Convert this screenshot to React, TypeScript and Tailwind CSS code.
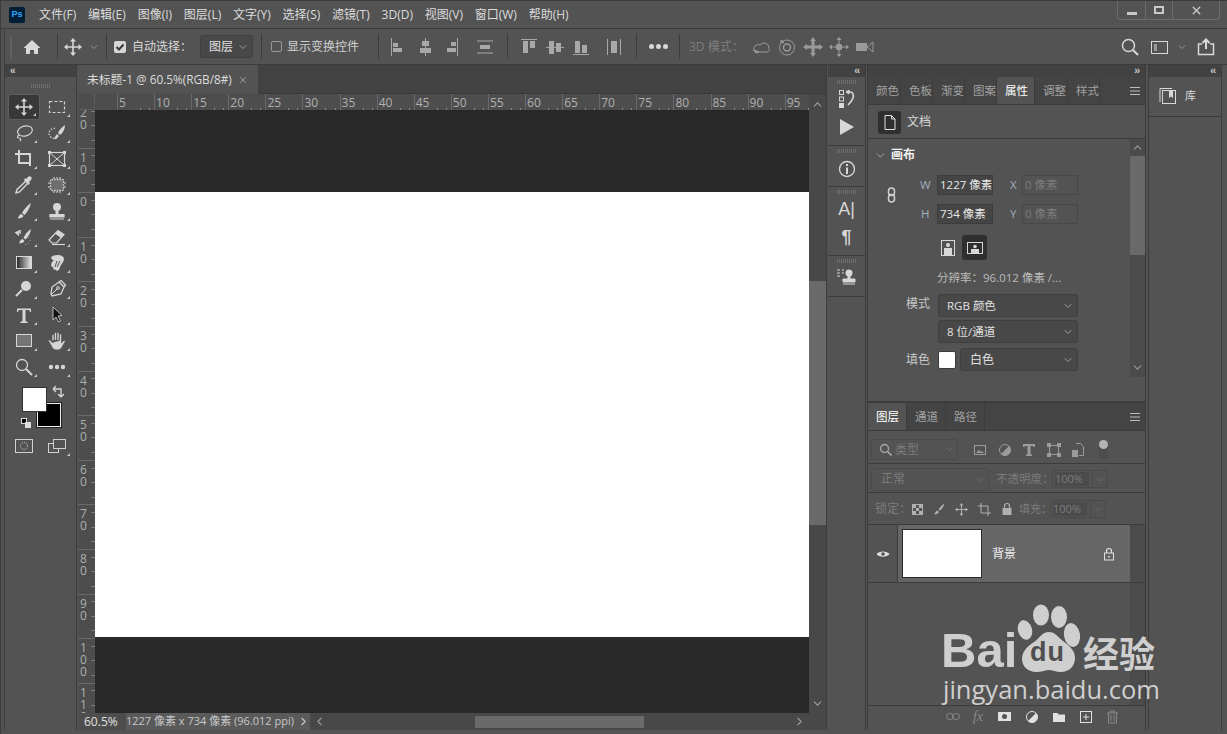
import type { ReactNode } from "react";
import { ChevronDown, ChevronUp, ChevronLeft, ChevronRight, X } from "lucide-react";

const menus = ["文件(F)", "编辑(E)", "图像(I)", "图层(L)", "文字(Y)", "选择(S)", "滤镜(T)", "3D(D)", "视图(V)", "窗口(W)", "帮助(H)"];
const hTicks = [5, 10, 15, 20, 25, 30, 35, 40, 45, 50, 55, 60, 65, 70, 75, 80, 85, 90, 95];
const vTicks = ["20", "10", "0", "10", "20", "30", "40", "50", "60", "70", "80", "90", "100", "110"];

function Ic({ w = 20, h = 20, children, className = "" }: { w?: number; h?: number; children: ReactNode; className?: string }) {
  return (
    <svg width={w} height={h} viewBox={`0 0 ${w} ${h}`} fill="none" stroke="currentColor" strokeWidth="1" className={"shrink-0 " + className}>
      {children}
    </svg>
  );
}

function MoveGlyph() {
  return (
    <Ic>
      <path d="M10 3v14M3 10h14" strokeWidth="1.6" />
      <path d="M10 1l3 3.5H7zM10 19l3-3.5H7zM1 10l3.5-3v6zM19 10l-3.5-3v6z" fill="currentColor" stroke="none" />
    </Ic>
  );
}

const toolIcons: ReactNode[] = [
  <MoveGlyph />,
  <Ic><rect x="2.5" y="4.5" width="15" height="11" strokeDasharray="3 2" strokeWidth="1.2" /></Ic>,
  <Ic><ellipse cx="11" cy="8" rx="7.5" ry="5" transform="rotate(-15 11 8)" strokeWidth="1.2" /><path d="M5 12c-2 1-2 3 0 3s2 2 1 3" strokeWidth="1.2" /></Ic>,
  <Ic><path d="M8 5.5a5 5 0 1 0 2 9" strokeDasharray="1.4 1.6" strokeWidth="1.4" /><path d="M18 2c-3 2-6 5-7 8l2 2c3-2 5-6 5-10zM10 11l2 2-3 3c-1 .5-2 0-1.5-1.500z" fill="currentColor" stroke="none" /></Ic>,
  <Ic><path d="M1 5h4M5 1v13h12M5 5h11v12" strokeWidth="2" /></Ic>,
  <Ic><rect x="2.500" y="3.500" width="15" height="13" strokeWidth="1.2" /><path d="M2.500 3.500l15 13M17.500 3.500l-15 13" /><rect x="1" y="2" width="3" height="3" fill="currentColor" stroke="none" /><rect x="16" y="2" width="3" height="3" fill="currentColor" stroke="none" /><rect x="1" y="15" width="3" height="3" fill="currentColor" stroke="none" /><rect x="16" y="15" width="3" height="3" fill="currentColor" stroke="none" /></Ic>,
  <Ic><path d="M11.500 6.500L3 14.500l-1 3.500 3.500-1 8-8.500" strokeWidth="1.400" /><path d="M10 5.500L14.500 10l1.500-2-1-1 2-2c1-1.200 .8-2.500 0-3.200s-2-.8-3 .2l-2 2-1-1z" fill="currentColor" stroke="none" /></Ic>,
  <Ic><rect x="3.500" y="4.500" width="13" height="11" rx="1" fill="#6e6e6e" strokeDasharray="1.500 1.200" strokeWidth="1.400" /><path d="M7 2v2M10 2v2M13 2v2M7 16v2M10 16v2M13 16v2M1 8h2M1 12h2M17 8h2M17 12h2" /></Ic>,
  <Ic><path d="M17 2c-3 2-7 6-9 10l2.500 2c3-3 5.500-8 6.500-12zM7.500 13c-2 .5-3 2-3.500 4.500 2.500 0 5-1 5.500-2.800z" fill="currentColor" stroke="none" /></Ic>,
  <Ic><circle cx="10" cy="6" r="4" fill="currentColor" stroke="none" /><rect x="8.500" y="9" width="3" height="4" fill="currentColor" stroke="none" /><path d="M3 13.500h14v2.500H3zM3 18h14" fill="currentColor" strokeWidth="1.200" stroke="currentColor" /></Ic>,
  <Ic><path d="M17 2c-3 2-6 5-7.500 9l2 1.500c3-2.500 5-6.500 5.500-10.500zM8.500 12c-2 .5-2.800 2-3.300 4.500 2.500 0 4.800-1 5.300-2.800z" fill="currentColor" stroke="none" /><path d="M2 5.500l5 .5M7 3.500L2 5.500l3 3" strokeWidth="1.500" /><path d="M15 10v.5M16 13v.5M14 16v.5M11.500 17.500v.5" strokeWidth="1.200" /></Ic>,
  <Ic><path d="M2 13L11 3.500l6 4-7.500 8.500H5z" strokeWidth="1.200" /><path d="M11 3.500l6 4-3 3.500-6-4.500z" fill="currentColor" stroke="none" /><path d="M5 17.500h13" strokeWidth="1.200" /></Ic>,
  <Ic><defs><linearGradient id="grad"><stop offset="0" stopColor="#222" /><stop offset="1" stopColor="#e8e8e8" /></linearGradient></defs><rect x="2.500" y="3.500" width="15" height="12" fill="url(#grad)" stroke="#d8d8d8" /></Ic>,
  <Ic><path d="M4 4c4-3.500 13-2.500 13 2 0 3-3 5-4 8-1 4-3.500 5-4.500 2.500-1.500 1-2.500-.5-2.500-2.500-1.500 0-2.500-1-1.500-3.500 0-2 2-2 2-3.500-1.500 0-3-2-2-3z" fill="currentColor" stroke="none" /><path d="M10 8l-2 6M13 8l-3 6" stroke="#535353" /></Ic>,
  <Ic><circle cx="12" cy="7" r="5" fill="currentColor" stroke="none" /><path d="M8 11l-6 6" strokeWidth="2" /></Ic>,
  <Ic><path d="M12 3l5 5-3 7-9 2-1-2 1-7z" strokeWidth="1.300" /><path d="M4 16l6-6" /><circle cx="11" cy="9" r="1.400" /><path d="M12 3l2-1.500L18.500 6 17 8" strokeWidth="1.300" /></Ic>,
  <Ic><path d="M3 7V3.500h14V7h-1c0-1.500-1-2-2-2h-2.500v10.500c0 1 .5 1 2 1V18H6.500v-1.500c1.500 0 2 0 2-1V5H6C5 5 4 5.500 4 7z" fill="currentColor" stroke="none" /></Ic>,
  <Ic><path d="M6 2l9 8.500-4 .5 2.500 5-2 1-2.500-5L6 15z" fill="#111" stroke="#d8d8d8" strokeWidth=".8" /></Ic>,
  <Ic><rect x="2.500" y="3.500" width="15" height="12" fill="#757575" stroke="#d8d8d8" /></Ic>,
  <Ic><path d="M5 9.500V4.500a1 1 0 0 1 2 0V9M7.500 9V2.500a1 1 0 0 1 2 0V9M10 9V2.500a1 1 0 0 1 2 0V9M12.500 9.500V4a1 1 0 0 1 2 0v8c1-1.500 2.500-3 3.500-2.500s-1.500 3.500-3 6.500c-1 2-2.500 3-5 3-3 0-4.500-1.500-5.500-4L1.500 10c-.5-1 1-1.500 2-.5L5 11.500z" fill="currentColor" stroke="#535353" strokeWidth=".6" /></Ic>,
  <Ic><circle cx="8" cy="8" r="5.500" strokeWidth="1.300" /><path d="M12 12l6 6" strokeWidth="2" /></Ic>,
  <Ic><circle cx="4" cy="10" r="2.200" fill="currentColor" stroke="none" /><circle cx="10" cy="10" r="2.200" fill="currentColor" stroke="none" /><circle cx="16" cy="10" r="2.200" fill="currentColor" stroke="none" /></Ic>,
];

function Tool({ children, active, corner = true }: { children: ReactNode; active?: boolean; corner?: boolean }) {
  return (
    <div className={"relative flex h-[26px] w-[32px] items-center justify-center rounded-[3px] text-[#d6d6d6] " + (active ? "border border-[#5e5e5e] bg-[#383838]" : "")}>
      {children}
      {corner && <span className="absolute bottom-[3px] right-[3px] h-0 w-0 border-b-[3px] border-l-[3px] border-b-[#c8c8c8] border-l-transparent" />}
    </div>
  );
}

function Gripper({ w = "w-[20px]" }: { w?: string }) {
  return <div className={"mx-auto h-[4px] bg-[repeating-linear-gradient(90deg,#6e6e6e_0_1px,transparent_1px_2px)] " + w} />;
}

function StripChev({ dir = "l" }: { dir?: "l" | "r" }) {
  return <span className="font-['Liberation_Sans',sans-serif] text-[10px] font-bold leading-[12px] tracking-[-1px] text-[#d0d0d0]">{dir === "l" ? "‹‹" : "››"}</span>;
}

function Div() {
  return <div className="h-[25px] w-px bg-[#3c3c3c]" />;
}

function Bars({ d, v }: { d: string; v: string }) {
  return (
    <Ic w={22} h={20} className="text-[#a8a8a8]">
      <path d={d} />
      <path d={v} fill="currentColor" stroke="none" />
    </Ic>
  );
}

function Sel({ children, className = "" }: { children: ReactNode; className?: string }) {
  return (
    <div className={"flex items-center justify-between rounded-[3px] border border-[#3f3f3f] bg-[#484848] pr-[3px] text-[#e0e0e0] " + className}>
      <span className="truncate">{children}</span>
      <ChevronDown size={12} strokeWidth={1.5} className="text-[#b8b8b8]" />
    </div>
  );
}

function Field({ children, off }: { children: ReactNode; off?: boolean }) {
  return (
    <div className={"flex h-[20px] w-[56px] items-center whitespace-nowrap border pl-[2px] text-[11.500px] " + (off ? "border-[#484848] text-[#7b7b7b]" : "border-[#3c3c3c] bg-[#454545] text-[#e8e8e8]")}>
      {children}
    </div>
  );
}

function Tab({ label, active, w, pl = "pl-[8px]" }: { label: string; active?: boolean; w: string; pl?: string }) {
  return (
    <div className={"flex h-full items-center whitespace-nowrap border-r border-[#3c3c3c] text-[11.500px] " + pl + " " + w + (active ? " bg-[#535353] text-white" : " text-[#a2a2a2]")}>
      {label}
    </div>
  );
}

function Pct() {
  return (
    <div className="ml-[3px] flex h-[18px] w-[56px] items-center rounded-[2px] border border-[#4a4a4a]">
      <span className="ml-[2px] flex h-[14px] w-[34px] items-center bg-[#4b4b4b] text-[11px] text-[#7c7c7c]">100%</span>
      <span className="ml-auto flex h-full w-[15px] items-center justify-center border-l border-[#4a4a4a] text-[#6e6e6e]">
        <ChevronDown size={11} />
      </span>
    </div>
  );
}

function LockIcon({ className = "" }: { className?: string }) {
  return (
    <Ic w={12} h={14} className={className}>
      <path d="M3.500 6V4a2.500 2.500 0 0 1 5 0v2" strokeWidth="1.200" />
      <rect x="1.500" y="6" width="9" height="7" fill="currentColor" stroke="none" />
    </Ic>
  );
}

function Cell({ w, children }: { w: string; children: ReactNode }) {
  return <div className={"flex items-center justify-center " + w}>{children}</div>;
}

export default function App() {
  return (
    <div className="relative flex h-[734px] w-[1227px] flex-col overflow-hidden border-l border-t border-[#3c3c3c] bg-[#535353] font-['Open_Sans','Noto_Sans_CJK_SC',sans-serif] text-[12px] text-[#d4d4d4]">
      {/* menu bar */}
      <div className="flex h-[28px] shrink-0 items-start border-b border-[#3c3c3c]">
        <div className="ml-[8px] mt-[6px] flex h-[16px] w-[16px] items-center justify-center rounded-[2px] bg-[#001e36] font-['Liberation_Sans',sans-serif] text-[9px] font-bold text-[#31a8ff]">Ps</div>
        <div className="ml-[14px] mt-[5px] flex gap-[11.800px] text-[#dcdcdc]">
          {menus.map((m) => (
            <span key={m} className="whitespace-nowrap leading-[18px]">{m}</span>
          ))}
        </div>
        <div className="ml-auto mr-[7px] flex h-[19px] w-[103px] rounded-b-[4px] border border-t-0 border-[#6c6c6c] text-[#c8c8c8]">
          <div className="flex w-[28px] items-end justify-center border-r border-[#6c6c6c] pb-[4px]"><div className="h-[3px] w-[10px] bg-[#c8c8c8]" /></div>
          <div className="flex w-[27px] items-center justify-center border-r border-[#6c6c6c]"><div className="h-[8px] w-[10px] border-2 border-[#c8c8c8]" /></div>
          <div className="flex flex-1 items-center justify-center"><X size={13} strokeWidth={2.600} /></div>
        </div>
      </div>

      {/* options bar */}
      <div className="ml-[3px] flex h-[36px] shrink-0 items-center border-b border-l border-[#3c3c3c]">
        <div className="ml-[5px] h-[22px] w-[2px] bg-[repeating-linear-gradient(0deg,#6e6e6e_0_1px,transparent_1px_2px)]" />
        <div className="flex w-[45px] justify-center pr-[5px] text-[#d8d8d8]">
          <Ic w={18} h={16}><path d="M9 1L0.500 9H3v6h4v-4h4v4h4V9h2.500z" fill="currentColor" stroke="none" /></Ic>
        </div>
        <Div />
        <div className="ml-[5px] text-[#d8d8d8]"><MoveGlyph /></div>
        <ChevronDown size={12} strokeWidth={1.500} className="ml-[5px] text-[#a8a8a8]" />
        <div className="ml-[6px]"><Div /></div>
        <div className="ml-[7px] flex h-[12px] w-[12px] items-center justify-center rounded-[2px] bg-[#d6d6d6]">
          <svg width="10" height="10" viewBox="0 0 10 10" fill="none" stroke="#3a3a3a" strokeWidth="2"><path d="M1.500 5l2.500 2.500 4.500-5" /></svg>
        </div>
        <span className="ml-[6px] w-[68px] whitespace-nowrap text-[#d8d8d8]">自动选择：</span>
        <Sel className="h-[23px] w-[53px] pl-[8px] text-[12px]">图层</Sel>
        <div className="ml-[8px]"><Div /></div>
        <div className="ml-[9px] h-[11px] w-[11px] rounded-[2px] border border-[#999]" />
        <span className="ml-[5px] w-[91px] whitespace-nowrap text-[#d0d0d0]">显示变换控件</span>
        <Div />
        <div className="ml-[10px] flex w-[115px] items-center">
          <div className="w-[25px]"><Bars d="M2.500 1v18" v="M4 6h5v4H4zM4 11h9v4H4z" /></div>
          <div className="w-[26px]"><Bars d="M11.500 1v18" v="M8 4h7v5H8zM6 11h11v5H6z" /></div>
          <div className="w-[34px]"><Bars d="M17.500 1v18" v="M11 5h5v4h-5zM7 11h9v4H7z" /></div>
          <Bars d="M3 4h16M3 16h16" v="M6 8h10v4H6z" />
        </div>
        <div className="ml-[3px]"><Div /></div>
        <div className="ml-[10px] flex w-[118px] items-center">
          <div className="w-[26px]"><Bars d="M3 2.500h16" v="M5 4h5v12H5zM12 4h5v7h-5z" /></div>
          <div className="w-[26px]"><Bars d="M2 10.500h18" v="M5 4h5v13H5zM12 6h5v9h-5z" /></div>
          <div className="w-[33px]"><Bars d="M3 17.500h16" v="M5 4h5v12H5zM12 8h5v8h-5z" /></div>
          <Bars d="M4.500 2v16M17.500 2v16" v="M8 4h6v12H8z" />
        </div>
        <Div />
        <div className="flex w-[42px] justify-center gap-[2px]">
          <span className="h-[5px] w-[5px] rounded-full bg-[#d8d8d8]" />
          <span className="h-[5px] w-[5px] rounded-full bg-[#d8d8d8]" />
          <span className="h-[5px] w-[5px] rounded-full bg-[#d8d8d8]" />
        </div>
        <Div />
        <span className="ml-[9px] w-[61px] whitespace-nowrap text-[#7e7e7e]">3D 模式：</span>
        <div className="ml-[1px] flex items-center gap-[6px] text-[#9a9a9a]">
          <Ic><path d="M4 9a4 4 0 0 1 5-1 5 5 0 0 1 9 3c1 2 0 4-3 4H6c-3 0-5-2-2-6z" /><path d="M3 13l5 2-3 1z" fill="currentColor" /></Ic>
          <Ic><circle cx="10" cy="10.500" r="7.500" /><circle cx="10" cy="10.500" r="3.500" strokeWidth="1.400" /><path d="M4 3l3 2-3 1z" fill="currentColor" /></Ic>
          <Ic><path d="M10 3v14M3 10h14" strokeWidth="3" /><path d="M10 0l3 4H7zM10 20l3-4H7zM0 10l4-3v6zM20 10l-4-3v6z" fill="currentColor" stroke="none" /></Ic>
          <Ic><circle cx="10" cy="10" r="3" fill="currentColor" /><path d="M10 2v16M2 10h16" /><path d="M10 0l2.500 3h-5zM10 20l2.500-3h-5zM0 10l3-2.500v5zM20 10l-3-2.500v5z" fill="currentColor" stroke="none" /></Ic>
          <Ic><rect x="1" y="6" width="11" height="8" fill="currentColor" stroke="none" /><path d="M12 10l6-5v10z" /></Ic>
        </div>
        <div className="ml-auto mr-[12px] flex items-center text-[#d8d8d8]">
          <Ic><circle cx="8.500" cy="8.500" r="6" strokeWidth="1.500" /><path d="M13 13l5 5" strokeWidth="2" /></Ic>
          <Ic w={18} h={16} className="ml-[11px]"><rect x=".5" y="2.500" width="16" height="12" /><rect x="3" y="5" width="3" height="7" fill="#9a9a9a" stroke="none" /></Ic>
          <ChevronDown size={12} strokeWidth={1.500} className="ml-[7px] text-[#a8a8a8]" />
          <Ic w={18} h={18} className="ml-[9px]"><path d="M5 6H1.500v10.500h15V6H13" strokeWidth="1.500" /><path d="M9 11V1.500M5.500 5L9 1.500 12.500 5" strokeWidth="2" /></Ic>
        </div>
      </div>

      {/* body */}
      <div className="flex min-h-0 flex-1 pb-[4px] pl-[3px]">
        {/* toolbar */}
        <div className="flex w-[73px] shrink-0 flex-col border-l border-r border-[#3c3c3c]">
          <div className="flex h-[12px] shrink-0 items-center bg-[#424242] pl-[5px]"><StripChev /></div>
          <div className="flex h-[17px] shrink-0 items-center"><Gripper /></div>
          <div className="grid grid-cols-[33px_33px] pl-[3px]">
            {toolIcons.map((icon, i) => (
              <Tool key={i} active={i === 0}>{icon}</Tool>
            ))}
          </div>
          <div className="relative h-[53px] shrink-0">
            <div className="absolute left-[32px] top-[23px] h-[24px] w-[24px] border border-[#eee] bg-black outline outline-1 outline-[#222]" />
            <div className="absolute left-[17px] top-[7px] h-[25px] w-[25px] border border-[#333] bg-white" />
            <div className="absolute left-[47px] top-[5px] text-[#d8d8d8]">
              <Ic w={12} h={13}><path d="M1 4h8v8M1 4l3-3M1 4l3 3M9 12l-3-3M9 12l3-3" strokeWidth="1.300" /></Ic>
            </div>
            <div className="absolute left-[16px] top-[38px] h-[6px] w-[6px] border border-[#ddd] bg-black" />
            <div className="absolute left-[20px] top-[42px] h-[6px] w-[6px] bg-[#ddd]" />
          </div>
          <div className="grid grid-cols-[33px_33px] pl-[3px]">
            <Tool corner={false}>
              <Ic w={18} h={14} className="text-[#d0d0d0]"><rect x=".5" y=".5" width="17" height="13" /><circle cx="9" cy="7" r="3.500" strokeDasharray="1 1" /></Ic>
            </Tool>
            <Tool>
              <Ic w={18} h={14} className="text-[#d0d0d0]"><rect x=".5" y="4.500" width="10" height="9" /><rect x="5.500" y=".5" width="12" height="9" fill="#535353" /></Ic>
            </Tool>
          </div>
        </div>

        <div className="w-px shrink-0" />

        {/* document */}
        <div className="flex w-[749px] shrink-0 flex-col border-r border-[#3c3c3c]">
          <div className="flex h-[29px] shrink-0 border-b border-[#3a3a3a] bg-[#424242]">
            <div className="flex h-[29px] w-[180px] items-center bg-[#535353] pl-[9px] text-[#dcdcdc]">
              <span className="whitespace-nowrap text-[11.800px]">未标题-1 @ 60.5%(RGB/8#)</span>
              <X size={10} className="ml-[6px] text-[#a8a8a8]" />
            </div>
          </div>
          <div className="flex min-h-0 flex-1">
            <div className="flex min-w-0 flex-1 flex-col">
              {/* top ruler */}
              <div className="flex h-[16px] shrink-0 overflow-hidden bg-[#4d4d4d] text-[#b0b0b0]">
                <div className="w-[17px] shrink-0 border-b border-r border-dotted border-[#6a6a6a]" />
                <div className="w-[22px] shrink-0" />
                {hTicks.map((t) => (
                  <div key={t} className="relative h-full w-[37.100px] shrink-0 border-l border-[#6a6a6a] pl-[1px] text-[12px] leading-[17px]">
                    {t}
                    <div className="absolute bottom-0 left-[18px] right-0 flex justify-around">
                      <span className="h-[2px] w-px bg-[#8a8a8a]" />
                      <span className="h-[2px] w-px bg-[#8a8a8a]" />
                    </div>
                  </div>
                ))}
              </div>
              <div className="flex min-h-0 flex-1">
                {/* left ruler */}
                <div className="w-[17px] shrink-0 overflow-hidden bg-[#4d4d4d] text-[#a9b2aa]">
                  <div className="mt-[-7px]">
                    {vTicks.map((t, i) => (
                      <div key={i} className="relative h-[44.600px] border-t border-[#6a6a6a] pl-[2px] pt-[3px]">
                        {t.split("").map((c, j) => (
                          <div key={j} className="text-[12px] leading-[12px]">{c}</div>
                        ))}
                        <div className="absolute bottom-0 right-0 top-0 flex flex-col justify-around">
                          <span className="h-px w-[4px] bg-[#7a7a7a]" />
                          <span className="h-px w-[4px] bg-[#7a7a7a]" />
                          <span className="h-px w-[4px] bg-[#7a7a7a]" />
                        </div>
                      </div>
                    ))}
                  </div>
                </div>
                <div className="flex min-w-0 flex-1 flex-col bg-[#282828]">
                  <div className="h-[82px] shrink-0" />
                  <div className="h-[445px] shrink-0 bg-white" />
                </div>
              </div>
            </div>
            {/* v scrollbar */}
            <div className="flex w-[17px] shrink-0 flex-col items-center bg-[#484848] text-[#a0a0a0]">
              <ChevronUp size={13} className="mt-[4px]" />
              <div className="mt-[170px] h-[244px] w-full bg-[#6a6a6a]" />
              <ChevronDown size={13} className="mb-[3px] mt-auto" />
            </div>
          </div>
          {/* status bar */}
          <div className="flex h-[17px] shrink-0 items-center bg-[#4d4d4d]">
            <span className="w-[48px] shrink-0 pl-[6px] text-[#e0e0e0]">60.5%</span>
            <div className="flex h-full w-[184px] shrink-0 items-center whitespace-nowrap bg-[#5a5a5a] text-[#c8c8c8]">
              <span className="text-[11px]">1227 像素 x 734 像素 (96.012 ppi)</span>
              <ChevronRight size={13} className="ml-auto" />
            </div>
            <div className="flex h-full flex-1 items-center bg-[#484848] text-[#9a9a9a]">
              <ChevronLeft size={13} className="ml-[3px]" />
              <div className="ml-[149px] h-[12px] w-[169px] bg-[#6a6a6a]" />
              <ChevronRight size={13} className="ml-auto mr-[20px]" />
            </div>
          </div>
        </div>

        {/* collapsed panels */}
        <div className="flex w-[39px] shrink-0 flex-col border-r border-[#3c3c3c] pl-px">
          <div className="flex h-[12px] shrink-0 items-center justify-end bg-[#424242] pr-[6px]"><StripChev /></div>
          <div className="flex h-[69px] shrink-0 flex-col items-center border-b border-[#3c3c3c] text-[#d8d8d8]">
            <div className="pb-[5px] pt-[3px]"><Gripper /></div>
            <Ic w={18} h={20}><rect x="1.500" y="1.500" width="4" height="4" /><rect x="1.500" y="8" width="4" height="4" /><rect x="1" y="14" width="5" height="5" fill="currentColor" stroke="none" /><path d="M9 3h3c3 0 4 3 3 6s-3 5-5 7" strokeWidth="1.600" /><path d="M8 3l3-2v4z" fill="currentColor" /></Ic>
            <Ic w={16} h={18} className="mt-[9px]"><path d="M1 1l14 8-14 8z" fill="currentColor" stroke="none" /></Ic>
          </div>
          <div className="flex h-[41px] shrink-0 flex-col items-center border-b border-[#3c3c3c] text-[#d8d8d8]">
            <div className="py-[3px]"><Gripper /></div>
            <Ic w={18} h={18} className="mt-[4px]"><circle cx="9" cy="9" r="7.500" strokeWidth="1.300" /><path d="M9 7.500V14M9 4v2" strokeWidth="2" /></Ic>
          </div>
          <div className="flex h-[69px] shrink-0 flex-col items-center border-b border-[#3c3c3c] text-[#d8d8d8]">
            <div className="py-[3px]"><Gripper /></div>
            <div className="mt-[1px] font-['Liberation_Sans',sans-serif] text-[18px] leading-[22px]">A<span className="font-thin">|</span></div>
            <div className="mt-[6px] font-['Liberation_Sans',sans-serif] text-[18px] font-bold leading-[22px]">¶</div>
          </div>
          <div className="flex h-[41px] shrink-0 flex-col items-center border-b border-[#3c3c3c] text-[#d8d8d8]">
            <div className="py-[3px]"><Gripper /></div>
            <Ic w={20} h={18} className="mt-[2px]"><path d="M0 2h3M5 2h2M0 5h3M5 5h2M0 8h3" /><circle cx="12" cy="5" r="3.500" fill="currentColor" stroke="none" /><rect x="10.500" y="7" width="3" height="4" fill="currentColor" stroke="none" /><path d="M6 11h12v3H6zM6 16h12" fill="currentColor" stroke="currentColor" /></Ic>
          </div>
        </div>

        <div className="w-px shrink-0" />

        {/* main panels */}
        <div className="flex w-[279px] shrink-0 flex-col border-l border-r border-[#3c3c3c]">
          <div className="flex h-[12px] shrink-0 items-center justify-end bg-[#424242] pr-[6px]"><StripChev dir="r" /></div>
          <div className="flex h-[28px] shrink-0 items-center border-b border-[#3c3c3c] bg-[#444444]">
            <Tab label="颜色" w="w-[33px]" />
            <Tab label="色板" w="w-[32px]" />
            <Tab label="渐变" w="w-[32px]" />
            <Tab label="图案" w="w-[32px]" />
            <Tab label="属性" w="w-[38px]" active />
            <Tab label="调整" w="w-[33px]" />
            <Tab label="样式" w="w-[32px]" />
            <Ic w={12} h={10} className="ml-auto mr-[4px] text-[#bdbdbd]"><path d="M1 1.500h10M1 5h10M1 8.500h10" /></Ic>
          </div>
          <div className="flex h-[34px] shrink-0 items-center border-b border-[#3c3c3c] pl-[10px] pt-[1px]">
            <div className="flex h-[23px] w-[23px] items-center justify-center rounded-[3px] bg-[#2f2f2f] text-[#e0e0e0]">
              <Ic w={12} h={15}><path d="M1 .5h6.500L11 4v10.500H1zM7.500 .5V4H11" /></Ic>
            </div>
            <span className="ml-[6px] text-[#d8d8d8]">文档</span>
          </div>
          <div className="flex h-[264px] shrink-0 border-b-2 border-[#3c3c3c]">
            <div className="min-w-0 flex-1">
              <div className="flex h-[31px] items-center pl-[6px] pt-[1px]">
                <ChevronDown size={13} strokeWidth={1.500} className="text-[#b8b8b8]" />
                <span className="ml-[4px] font-bold text-[#f0f0f0]">画布</span>
              </div>
              <div className="flex">
                <div className="flex w-[46px] justify-end pr-[18px] pt-[17px] text-[#d0d0d0]">
                  <Ic w={9} h={16}><rect x="1.500" y="1" width="6" height="7.500" rx="3" strokeWidth="1.500" /><rect x="1.500" y="7.500" width="6" height="7.500" rx="3" strokeWidth="1.500" /></Ic>
                </div>
                <div className="flex flex-col gap-[9px] pt-[5px]">
                  <div className="flex items-center text-[#a4b0bc]">
                    <span className="w-[23px] pl-[6px] text-[11.500px]">W</span>
                    <Field>1227 像素</Field>
                    <span className="w-[29px] pl-[17px] text-[11.500px]">X</span>
                    <Field off>0 像素</Field>
                  </div>
                  <div className="flex items-center text-[#a4b0bc]">
                    <span className="w-[23px] pl-[7px] text-[11.500px]">H</span>
                    <Field>734 像素</Field>
                    <span className="w-[29px] pl-[17px] text-[11.500px]">Y</span>
                    <Field off>0 像素</Field>
                  </div>
                </div>
              </div>
              <div className="ml-[69px] mt-[11px] flex items-center gap-[5px] text-[#d8d8d8]">
                <Ic w={18} h={18} className="ml-[2px]"><rect x="2.500" y="1.500" width="13" height="15" /><circle cx="9" cy="6" r="2" fill="currentColor" stroke="none" /><rect x="5" y="9" width="8" height="7" fill="currentColor" stroke="none" /></Ic>
                <div className="flex h-[25px] w-[25px] items-center justify-center rounded-[3px] bg-[#2f2f2f]">
                  <Ic w={18} h={14}><rect x="1.500" y="1.500" width="15" height="11" /><circle cx="9" cy="5.500" r="1.800" fill="currentColor" stroke="none" /><rect x="5" y="8" width="8" height="4" fill="currentColor" stroke="none" /></Ic>
                </div>
              </div>
              <div className="ml-[69px] mt-[9px] whitespace-nowrap text-[11.500px] text-[#bcbcbc]">分辨率：96.012 像素 /...</div>
              <div className="mt-[8px] flex items-start">
                <span className="w-[70px] pl-[38px] pt-[1px] text-[#c8c8c8]">模式</span>
                <Sel className="h-[23px] w-[140px] pl-[8px] text-[11.500px]">RGB 颜色</Sel>
              </div>
              <div className="ml-[70px] mt-[3px]">
                <Sel className="h-[23px] w-[140px] pl-[8px] text-[11.500px]">8 位/通道</Sel>
              </div>
              <div className="mt-[5px] flex items-center">
                <span className="w-[70px] pl-[38px] text-[#c8c8c8]">填色</span>
                <div className="h-[18px] w-[18px] rounded-[2px] border border-[#3c3c3c] bg-white" />
                <Sel className="ml-[4px] h-[23px] w-[118px] pl-[9px] text-[12px]">白色</Sel>
              </div>
            </div>
            <div className="flex h-[238px] w-[15px] shrink-0 flex-col items-center bg-[#4b4b4b] text-[#9a9a9a]">
              <ChevronUp size={13} className="mt-[2px]" />
              <div className="mt-[2px] h-[99px] w-full bg-[#6a6a6a]" />
              <ChevronDown size={13} className="mb-[3px] mt-auto" />
            </div>
          </div>
          <div className="flex h-[28px] shrink-0 items-center border-b border-[#3c3c3c] bg-[#444444]">
            <Tab label="图层" w="w-[39px]" active />
            <Tab label="通道" w="w-[39px]" />
            <Tab label="路径" w="w-[39px]" />
            <Ic w={12} h={10} className="ml-auto mr-[4px] text-[#bdbdbd]"><path d="M1 1.500h10M1 5h10M1 8.500h10" /></Ic>
          </div>
          <div className="flex h-[33px] shrink-0 items-center border-b border-[#3c3c3c] pl-[3px] pt-[5px] text-[#9c9c9c]">
            <div className="flex h-[21px] w-[87px] items-center rounded-[3px] border border-[#4a4a4a] pl-[7px] text-[#7c7c7c]">
              <Ic w={13} h={13} className="text-[#a8a8a8]"><circle cx="5.500" cy="5.500" r="4" strokeWidth="1.300" /><path d="M8.500 8.500l4 4" strokeWidth="1.600" /></Ic>
              <span className="ml-[3px]">类型</span>
              <ChevronDown size={11} className="ml-auto mr-[2px] text-[#6e6e6e]" />
            </div>
            <div className="ml-[10px] flex items-center">
              <Cell w="w-[24.500px]"><Ic w={12} h={12}><rect x=".5" y="1.500" width="11" height="9" /><path d="M2 9l3-3 2 2 1-1 2 2z" fill="currentColor" stroke="none" /></Ic></Cell>
              <Cell w="w-[24.500px]"><Ic w={12} h={12}><circle cx="6" cy="6" r="5.500" /><path d="M10 2a5.500 5.500 0 0 1-8 8z" fill="currentColor" stroke="none" /></Ic></Cell>
              <Cell w="w-[24.500px]"><Ic w={14} h={14}><path d="M1 1h12v3h-1.500L11 3H8.500v8.500H10V13H4v-1.500h1.500V3H3l-.5 1H1z" fill="currentColor" stroke="none" /></Ic></Cell>
              <Cell w="w-[24.500px]"><Ic w={14} h={14}><rect x="2.500" y="2.500" width="9" height="9" /><rect x="0" y="0" width="4" height="4" fill="currentColor" stroke="none" /><rect x="10" y="0" width="4" height="4" fill="currentColor" stroke="none" /><rect x="0" y="10" width="4" height="4" fill="currentColor" stroke="none" /><rect x="10" y="10" width="4" height="4" fill="currentColor" stroke="none" /></Ic></Cell>
              <Cell w="w-[24.500px]"><Ic w={12} h={14}><path d="M4 .5h4.500l3 3v9H7" /><rect x="0" y="7" width="6" height="7" fill="currentColor" stroke="none" /></Ic></Cell>
            </div>
            <div className="relative ml-[8px] h-[18px] w-[9px] rounded-full border border-[#4a4a4a] bg-[#4d4d4d]">
              <div className="absolute left-[-1px] top-[-2px] h-[9px] w-[9px] rounded-full bg-[#b4b4b4]" />
            </div>
          </div>
          <div className="flex h-[29px] shrink-0 items-center border-b border-[#3c3c3c] pl-[3px] pt-[2px] text-[#7c7c7c]">
            <div className="flex h-[23px] w-[118px] items-center justify-between rounded-[3px] border border-[#4a4a4a] pl-[9px] pr-[2px]">
              <span>正常</span>
              <ChevronDown size={11} className="text-[#6e6e6e]" />
            </div>
            <span className="ml-[7px] w-[53px] whitespace-nowrap text-[11.500px] text-[#7c7c7c]">不透明度：</span>
            <Pct />
          </div>
          <div className="flex h-[31px] shrink-0 items-center pl-[7px] pt-[1px] text-[#7c7c7c]">
            <span className="w-[37px] whitespace-nowrap">锁定：</span>
            <div className="flex items-center gap-[10px] text-[#b0b0b0]">
              <div className="grid h-[11px] w-[11px] grid-cols-3 grid-rows-3 border border-[#b0b0b0]">
                <span className="bg-[#b0b0b0]" /><span /><span className="bg-[#b0b0b0]" />
                <span /><span className="bg-[#b0b0b0]" /><span />
                <span className="bg-[#b0b0b0]" /><span /><span className="bg-[#b0b0b0]" />
              </div>
              <Ic w={12} h={12}><path d="M11.500.5C9 2 7 4 5.500 6.500l1.500 1C9 6 11 3 11.500.5zM4.500 7.500C3 8 2.500 9.500 1 11.500c2.500 0 4.500-1 5-2.500z" fill="currentColor" stroke="none" /></Ic>
              <Ic w={13} h={13}><path d="M6.500 1v11M1 6.500h11" /><path d="M6.500 0l2 2.500h-4zM6.500 13l2-2.500h-4zM0 6.500L2.500 4.500v4zM13 6.500l-2.500-2v4z" fill="currentColor" stroke="none" /></Ic>
              <Ic w={13} h={13}><path d="M3 0v10h10M0 3h10v10" /></Ic>
              <LockIcon />
            </div>
            <span className="ml-[6px] w-[30px] whitespace-nowrap text-[11px]">填充：</span>
            <div className="ml-[-2px]"><Pct /></div>
          </div>
          <div className="flex h-[58px] shrink-0 border-t border-[#3c3c3c]">
            <div className="flex w-[30px] items-center justify-center border-r border-[#3c3c3c] text-[#e0e0e0]">
              <Ic w={14} h={10}><path d="M.5 5C3 1.500 11 1.500 13.500 5 11 8.500 3 8.500.5 5z" fill="currentColor" stroke="none" /><circle cx="7" cy="5" r="1.800" fill="#535353" stroke="none" /></Ic>
            </div>
            <div className="flex w-[232px] items-center bg-[#666666] pl-[4px] text-[#f0f0f0]">
              <div className="h-[49px] w-[80px] border border-[#2a2a2a] bg-white" />
              <span className="ml-[10px]">背景</span>
              <Ic w={12} h={14} className="ml-auto mr-[15px] text-[#e0e0e0]"><path d="M3.500 6V4a2.500 2.500 0 0 1 5 0v2" strokeWidth="1.200" /><rect x="1.500" y="6" width="9" height="7" /><path d="M6 9v1.500" strokeWidth="1.500" /></Ic>
            </div>
            <div className="flex-1 bg-[#4b4b4b]" />
          </div>
          <div className="flex min-h-0 flex-1 border-t border-[#3c3c3c]">
            <div className="w-[262px] shrink-0" />
            <div className="flex-1 bg-[#4b4b4b]" />
          </div>
          <div className="flex h-[25px] shrink-0 items-center border-t border-[#3c3c3c] pb-[3px] pl-[72px] text-[#a0a0a0]">
            <Cell w="w-[26px]"><Ic w={14} h={10} className="text-[#8a8a8a]"><rect x=".5" y="1.500" width="7" height="6" rx="3" /><rect x="6.500" y="1.500" width="7" height="6" rx="3" /></Ic></Cell>
            <Cell w="w-[24px]"><span className="font-['Liberation_Serif',serif] text-[14px] italic text-[#8a8a8a]">fx</span></Cell>
            <Cell w="w-[28px]"><div className="flex h-[9px] w-[13px] items-center justify-center bg-[#e0e0e0]"><span className="h-[5px] w-[5px] rounded-full bg-[#535353]" /></div></Cell>
            <Cell w="w-[28px]"><Ic w={14} h={14} className="text-[#e0e0e0]"><circle cx="7" cy="7" r="5.500" /><path d="M11 3a5.500 5.500 0 0 1-8 8z" fill="currentColor" stroke="none" /></Ic></Cell>
            <Cell w="w-[26px]"><Ic w={14} h={12} className="text-[#e0e0e0]"><path d="M1 2h4.500l1 1.500H13V11H1z" fill="currentColor" stroke="none" /></Ic></Cell>
            <Cell w="w-[28px]"><Ic w={12} h={12} className="text-[#e0e0e0]"><rect x=".5" y=".5" width="11" height="11" /><path d="M6 3v6M3 6h6" /></Ic></Cell>
            <Cell w="w-[24px]"><Ic w={13} h={14} className="text-[#8a8a8a]"><path d="M1 3h11M4.500 3V1h4v2M2.500 3v10h8V3M5 5v6M8 5v6" /></Ic></Cell>
          </div>
        </div>

        <div className="w-[2px] shrink-0" />

        {/* library panel */}
        <div className="flex w-[74px] shrink-0 flex-col border-l border-r border-[#3c3c3c]">
          <div className="flex h-[12px] shrink-0 items-center justify-end bg-[#424242] pr-[6px]"><StripChev /></div>
          <div className="flex h-[40px] shrink-0 items-center border-b border-[#3c3c3c] pl-[10px] text-[#d8d8d8]">
            <Ic w={17} h={17}><rect x="3.500" y="2.500" width="13" height="13" /><path d="M1 14V.5h12" /><path d="M10 3h4v7l-2-1.500L10 10z" fill="currentColor" stroke="none" /></Ic>
            <span className="ml-[9px] text-[11px]">库</span>
          </div>
        </div>
      </div>

      {/* watermark */}
      <div className="absolute left-[940px] top-[601px] h-[106px] w-[225px] text-[#cfcfcf]">
        <span className="absolute left-0 top-[20px] font-['Liberation_Sans',sans-serif] text-[49px] font-bold leading-[56px]">Bai</span>
        <svg width="70" height="72" viewBox="0 0 70 72" className="absolute left-[73px] top-0" fill="currentColor">
          <ellipse cx="11" cy="28" rx="7" ry="10" transform="rotate(-15 11 28)" />
          <ellipse cx="27" cy="13" rx="8" ry="10.500" />
          <ellipse cx="45" cy="15" rx="8" ry="11" />
          <ellipse cx="58" cy="33" rx="8" ry="12" transform="rotate(-10 58 33)" />
          <path d="M35 30c6 0 9 5 14 9 7 5 12 10 12 17 0 9-7 14-14 14-5 0-9-2-12-2s-7 2-13 2c-7 0-14-5-14-13 0-8 6-13 12-17 6-4 8-10 15-10z" />
        </svg>
        <span className="absolute left-[89px] top-[33px] font-['Liberation_Sans',sans-serif] text-[27px] font-bold leading-[34px] tracking-[1px] text-[#4f4f4f]">du</span>
        <span className="absolute left-[142px] top-[26px] whitespace-nowrap font-['Noto_Sans_CJK_SC',sans-serif] text-[36px] font-bold leading-[48px]">经验</span>
        <span className="absolute left-[2px] top-[70px] whitespace-nowrap font-['Open_Sans',sans-serif] text-[25.500px] leading-[34px]">jingyan.baidu.com</span>
      </div>
    </div>
  );
}
